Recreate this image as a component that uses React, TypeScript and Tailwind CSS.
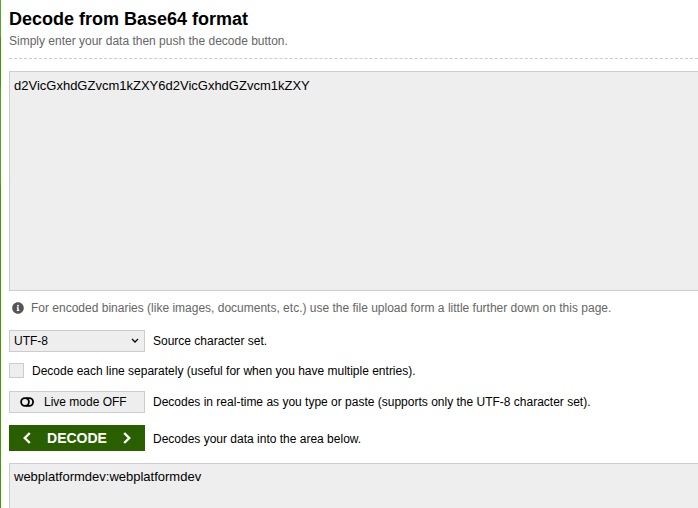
import { useState } from "react";

function InfoIcon() {
  return (
    <svg viewBox="0 0 512 512" className="size-3 shrink-0 fill-[#555555]" aria-hidden="true">
      <path d="M256 8C119 8 8 119 8 256s111 248 248 248 248-111 248-248S393 8 256 8zm0 110a42 42 0 1 1 0 84 42 42 0 0 1 0-84zm56 254c0 7-5 12-12 12h-88c-7 0-12-5-12-12v-24c0-7 5-12 12-12h12v-64h-12c-7 0-12-5-12-12v-24c0-7 5-12 12-12h64c7 0 12 5 12 12v100h12c7 0 12 5 12 12v24z" />
    </svg>
  );
}

function ToggleIcon() {
  return (
    <svg viewBox="0 0 14 10" className="h-[10px] w-[14px] shrink-0 fill-none stroke-black stroke-[1.8]" aria-hidden="true">
      <circle cx="5" cy="5" r="3.9" />
      <path d="M6 1.1h3.2a3.9 3.9 0 0 1 0 7.8H6" />
    </svg>
  );
}

function Chevron({ right = false }: { right?: boolean }) {
  return (
    <svg viewBox="0 0 8 12" className="h-3 w-2 shrink-0 fill-none stroke-white stroke-[2.4]" aria-hidden="true">
      <path d={right ? "M1.2 1l5 5-5 5" : "M6.8 1l-5 5 5 5"} />
    </svg>
  );
}

export default function App() {
  const [source, setSource] = useState("d2VicGxhdGZvcm1kZXY6d2VicGxhdGZvcm1kZXY");
  const [live, setLive] = useState(false);

  return (
    <div className="flex min-h-screen bg-white font-['Liberation_Sans',Arial,sans-serif] text-xs text-black">
      <div className="w-px shrink-0 bg-[linear-gradient(#55a823_0_37px,#3f9800_37px_87px,#50a51a_87px_185px,#459a00_185px)]" />
      <main className="flex min-w-0 flex-1 flex-col pl-2">
        <header className="border-b border-dashed border-[#cccccc] pt-2 pb-[9px]">
          <h1 className="text-lg leading-[22px] font-bold">Decode from Base64 format</h1>
          <p className="pt-[3px] leading-4 text-[#666666]">Simply enter your data then push the decode button.</p>
        </header>
        <textarea
          aria-label="Data to decode"
          spellCheck={false}
          value={source}
          onChange={(e) => setSource(e.target.value)}
          className="mt-3 block h-[220px] w-full resize-none border border-r-0 border-[#cccccc] bg-[#eeeeee] px-1 py-[6px] text-[13px] leading-4 outline-none"
        />
        <p className="mt-[9px] flex items-center gap-[7px] pl-[3px] leading-4 text-[#666666]">
          <InfoIcon />
          For encoded binaries (like images, documents, etc.) use the file upload form a little further down on this page.
        </p>
        <div className="mt-[14px] flex items-center gap-2">
          <div className="grid w-[136px] items-center">
            <select id="charset" className="col-start-1 row-start-1 h-[22px] w-full appearance-none border border-[#cccccc] bg-[#eeeeee] px-1 outline-none">
              <option>UTF-8</option>
              <option>ASCII</option>
              <option>ISO-8859-1</option>
            </select>
            <svg viewBox="0 0 8 6" className="pointer-events-none col-start-1 row-start-1 mr-[6px] h-[6px] w-2 justify-self-end fill-none stroke-black stroke-[1.3]" aria-hidden="true">
              <path d="M1 1l3 3 3-3" />
            </svg>
          </div>
          <label htmlFor="charset">Source character set.</label>
        </div>
        <div className="mt-[11px] flex items-start gap-2">
          <input
            id="lines"
            type="checkbox"
            className="size-[15px] appearance-none border border-[#cccccc] bg-[#eeeeee] checked:bg-[#2a5f00]"
          />
          <label htmlFor="lines" className="leading-4">Decode each line separately (useful for when you have multiple entries).</label>
        </div>
        <div className="mt-3 flex items-center gap-2">
          <button
            type="button"
            aria-pressed={live}
            aria-describedby="live-help"
            onClick={() => setLive(!live)}
            className="flex h-[22px] w-[136px] items-center gap-[10px] border border-[#cccccc] bg-[#eeeeee] pl-[10px]"
          >
            <ToggleIcon />
            Live mode {live ? "ON" : "OFF"}
          </button>
          <p id="live-help">Decodes in real-time as you type or paste (supports only the UTF-8 character set).</p>
        </div>
        <div className="mt-3 flex items-center gap-2">
          <button
            type="button"
            aria-describedby="decode-help"
            className="flex h-[26px] w-[136px] items-center justify-between bg-[#2a5f00] px-[14px] text-sm font-bold text-white"
          >
            <Chevron />
            DECODE
            <Chevron right />
          </button>
          <p id="decode-help" className="pt-0.5">Decodes your data into the area below.</p>
        </div>
        <textarea
          aria-label="Decoded data"
          readOnly
          spellCheck={false}
          value="webplatformdev:webplatformdev"
          className="mt-3 block h-0 w-full flex-1 resize-none border border-r-0 border-b-0 border-[#cccccc] bg-[#eeeeee] px-1 py-[5px] text-[13px] leading-4 outline-none"
        />
      </main>
    </div>
  );
}
